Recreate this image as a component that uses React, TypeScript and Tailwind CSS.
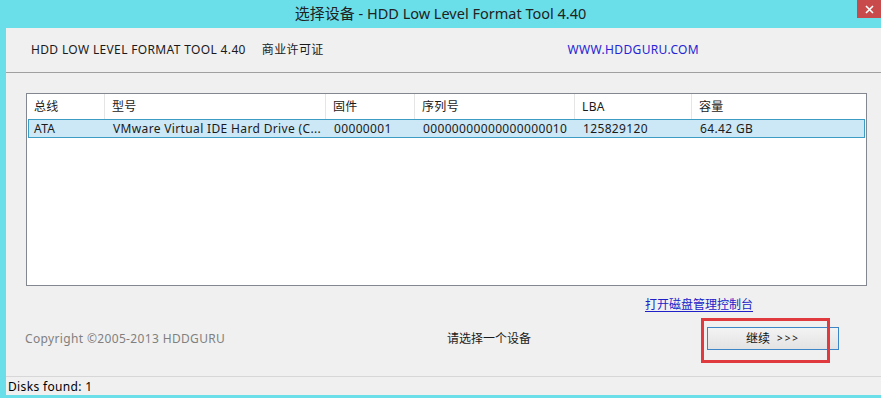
import React from 'react';

const font = { fontFamily: '"Noto Sans", "Noto Sans CJK SC", sans-serif' };

const cols = [
  { key: 'bus', title: '总线', w: 'w-[78px]' },
  { key: 'model', title: '型号', w: 'w-[221px]' },
  { key: 'fw', title: '固件', w: 'w-[89px]' },
  { key: 'sn', title: '序列号', w: 'w-[160px]' },
  { key: 'lba', title: 'LBA', w: 'w-[117px]' },
  { key: 'cap', title: '容量', w: 'flex-1' },
];

const row = ['ATA', 'VMware Virtual IDE Hard Drive (C...', '00000001', '00000000000000000010', '125829120', '64.42 GB'];

export default function App() {
  return (
    <div className="w-[881px] h-[398px] bg-[#6adfe9] flex flex-col overflow-hidden text-[12px] tracking-[0.35px] text-[#1a1a1a]" style={font}>
      {/* Title bar */}
      <div className="relative h-[28px] shrink-0 flex items-center justify-center tracking-normal">
        <span className="text-[#222] pb-[1px] flex items-baseline">
          <span className="text-[15px]">选择设备</span>
          <span className="text-[14.5px]">&nbsp;- HDD Low Level Format Tool 4.40</span>
        </span>
        <div className="absolute top-0 right-0 w-[24px] h-[18px] bg-[#c94a4a] flex items-center justify-center">
          <svg width="9" height="9" viewBox="0 0 9 9">
            <path d="M1 1L8 8M8 1L1 8" stroke="#fff" strokeWidth="1.6" />
          </svg>
        </div>
      </div>

      {/* Window body */}
      <div className="relative ml-[6px] h-[367px] bg-[#f0f0f0] flex flex-col">
        {/* Header strip */}
        <div className="h-[45px] shrink-0 flex items-center pl-[25px] border-b border-[#a0a0a0]">
          <span>HDD LOW LEVEL FORMAT TOOL 4.40</span>
          <span className="ml-[16px]">商业许可证</span>
          <span className="ml-[244px] text-[#2424d4]">WWW.HDDGURU.COM</span>
        </div>

        {/* Device list */}
        <div className="pt-[20px] pl-[20px]">
          <div className="w-[841px] h-[193px] bg-white border border-[#828790] flex flex-col">
            <div className="h-[25px] flex">
              {cols.map((c, i) => (
                <div key={c.key} className={`${c.w} flex items-center pl-[7px] ${i < cols.length - 1 ? 'border-r border-[#e5e5e5]' : ''}`}>
                  {c.title}
                </div>
              ))}
            </div>
            <div className="mx-[1px] h-[19px] flex bg-[#cce8f6] border border-[#3d9cc4]">
              {cols.map((c, i) => (
                <div key={c.key} className={`${c.w} ${i === 0 ? 'pl-[6px] -ml-[1px]' : 'pl-[7px]'} flex items-center whitespace-nowrap overflow-hidden`}>
                  {row[i]}
                </div>
              ))}
            </div>
          </div>
        </div>

        {/* Disk management link */}
        <div className="flex justify-end pr-[128px] mt-[10px] tracking-normal">
          <span className="text-[#2020c8] underline underline-offset-2">打开磁盘管理控制台</span>
        </div>

        {/* Footer row */}
        <div className="flex items-center mt-[13px] pl-[19px]">
          <span className="w-[422px] text-[#808080]">Copyright ©2005-2013 HDDGURU</span>
          <span className="w-[260px] tracking-normal">请选择一个设备</span>
          <button className="w-[132px] h-[23px] border border-[#3c86c8] bg-gradient-to-b from-[#f3f3f3] to-[#e3e3e3] flex items-center justify-center gap-[7px] text-[#111] tracking-normal">
            <span>继续</span>
            <span className="tracking-[2px] text-[10px]">&gt;&gt;&gt;</span>
          </button>
        </div>

        {/* Red highlight annotation */}
        <div className="absolute left-[695px] top-[290px] w-[129px] h-[45px] border-[3px] border-[#e03a3f]" />

        {/* Status bar */}
        <div className="mt-auto h-[19px] border-t border-[#d7d7d7] flex items-center pl-[2px] pt-[1px] text-black">
          Disks found: 1
        </div>
      </div>
      <div className="flex-1" />
    </div>
  );
}
